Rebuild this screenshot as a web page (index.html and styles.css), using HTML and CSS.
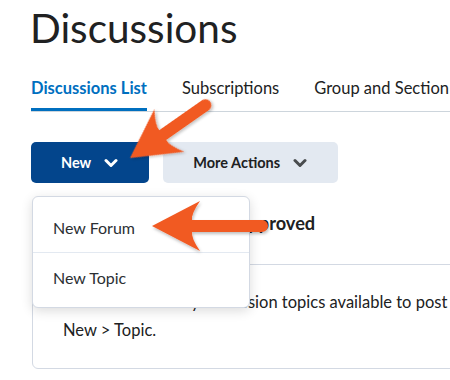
FILE: index.html
```html
<!DOCTYPE html>
<html lang="en">
<head>
    <meta charset="UTF-8">
    <title>Discussions</title>
    <link rel="stylesheet" href="styles.css">
</head>
<body>
    <div id="page">
        <h1 class="title">Discussions</h1>

        <ul class="tabs">
            <li class="tab selected">Discussions List</li>
            <li class="tab">Subscriptions</li>
            <li class="tab">Group and Section Restrictions</li>
        </ul>

        <div class="actions">
            <button class="btn btn-primary">New
                <svg class="chevron" width="14" height="10" viewBox="0 0 14 10"><polyline points="2,2.5 7,7.5 12,2.5"/></svg>
            </button>
            <button class="btn btn-secondary">More Actions
                <svg class="chevron" width="14" height="10" viewBox="0 0 14 10"><polyline points="2,2.5 7,7.5 12,2.5"/></svg>
            </button>

            <ul class="menu">
                <li>New Forum</li>
                <li>New Topic</li>
            </ul>
        </div>

        <h2 class="section-title">Discussion Posts Not Yet Approved</h2>

        <div class="panel">
            <p>You don't have any discussion topics available to post in. To create a topic, click<br>New &gt; Topic.</p>
        </div>
    </div>

    <!-- callout arrows drawn over the screenshot -->
    <svg class="callouts" width="450" height="380" viewBox="0 0 450 380">
        <defs>
            <filter id="shadow" x="-20%" y="-40%" width="140%" height="180%">
                <feDropShadow dx="1" dy="2" stdDeviation="1.5" flood-color="#000" flood-opacity="0.25"/>
            </filter>
        </defs>
        <path class="arrow" transform="translate(130 158) rotate(-35)"
              d="M0,0 L48,-26 Q39,-12 40,-6 L92,-6 A6,6 0 0 1 92,6 L40,6 Q39,12 48,26 Z"/>
        <path class="arrow" transform="translate(152 226)"
              d="M0,0 L48,-25 Q39,-12 40,-6 L110,-6 A6,6 0 0 1 110,6 L40,6 Q39,12 48,25 Z"/>
    </svg>
</body>
</html>
```

FILE: styles.css
```css
*{
    margin: 0;
    padding: 0;
    box-sizing: border-box;
}
ul{
    list-style: none;
}
html, body{
    overflow: hidden;
}
body{
    font-family: Lato, "Open Sans", sans-serif;
    color: #202122;
    background: #fff;
}
#page{
    width: 760px;
    padding: 4px 0 0 32px;
}
.title{
    font-size: 40.5px;
    font-weight: 400;
    line-height: 48px;
    margin-left: -2px;
}
.tabs{
    display: flex;
    gap: 35px;
    margin-top: 26px;
    margin-left: -1px;
    border-bottom: 1px solid #cdd5dc;
    white-space: nowrap;
}
.tab{
    font-size: 16.5px;
    line-height: 20px;
    padding-bottom: 10px;
    border-bottom: 3px solid transparent;
    color: #202122;
}
.tab.selected{
    color: #006fbf;
    font-weight: 700;
    border-bottom-color: #006fbf;
}
.actions{
    position: relative;
    display: flex;
    gap: 14px;
    margin-top: 30px;
    margin-left: -1px;
}
.btn{
    display: flex;
    align-items: center;
    gap: 13px;
    height: 41px;
    padding: 0 31px 0 30px;
    border: none;
    border-radius: 5px;
    font-family: inherit;
    font-size: 14.5px;
    font-weight: 700;
}
.btn-primary{
    background: #03458c;
    color: #fff;
}
.btn-secondary{
    background: #e3e9f1;
    color: #202122;
}
.chevron{
    fill: none;
    stroke: currentColor;
    stroke-width: 3;
    stroke-linecap: round;
    stroke-linejoin: round;
}
.btn-secondary .chevron{
    stroke: #494c4e;
}
.menu{
    position: absolute;
    top: 54px;
    left: 1px;
    width: 218px;
    padding: 5px 0;
    background: #fff;
    border: 1px solid #d3d9e3;
    border-radius: 6px;
    box-shadow: 0 3px 12px rgba(0, 0, 0, 0.14);
    z-index: 2;
}
.menu li{
    height: 50px;
    padding-left: 20px;
    display: flex;
    align-items: center;
    font-size: 16px;
    color: #2b2f33;
}
.menu li + li{
    border-top: 1px solid #e3e9f1;
}
.section-title{
    margin-top: 28px;
    font-size: 18.2px;
    font-weight: 700;
    line-height: 24px;
    color: #202122;
}
.panel{
    margin-top: 29px;
    border: 1px solid #d3d9e3;
    border-radius: 6px;
    padding: 23px 30px 24px 30px;
    font-size: 16.5px;
    line-height: 28px;
    color: #202122;
}
.callouts{
    position: absolute;
    top: 0;
    left: 0;
    pointer-events: none;
    z-index: 5;
}
.arrow{
    fill: #f15a24;
    filter: url(#shadow);
}
```
